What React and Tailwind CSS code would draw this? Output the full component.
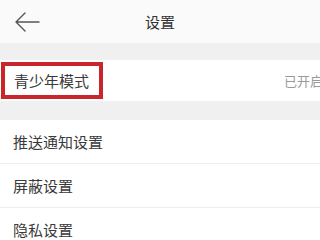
import React from "react";

const rows = ["推送通知设置", "屏蔽设置", "隐私设置"];

const BackArrow = () => (
  <svg width="26" height="22" viewBox="0 0 26 22" fill="none">
    <path d="M11 2 L2 11 L11 20 M2 11 H25" stroke="#555" strokeWidth="1.4" strokeLinecap="round" strokeLinejoin="round" />
  </svg>
);

const App = () => {
  return (
    <div
      className="w-[320px] h-[240px] overflow-hidden bg-white text-[#3a3a3a]"
      style={{ fontFamily: '"Noto Sans CJK SC", "Noto Sans", sans-serif' }}
    >
      {/* header */}
      <div className="h-[43px] bg-[#fafafa] grid grid-cols-[1fr_auto_1fr] items-center">
        <div className="pl-[14px] flex items-center">
          <BackArrow />
        </div>
        <span className="text-[15px] leading-none text-[#333]">设置</span>
        <div />
      </div>

      <div className="h-[17px] bg-[#f0f0f0]" />

      {/* teen mode row */}
      <div className="h-[41px] flex items-center pl-[1px]">
        <div className="h-[37px] w-[102px] border-[4px] border-[#c9262b] flex items-center pl-[9px]">
          <span className="text-[15px] leading-none">青少年模式</span>
        </div>
        <span className="ml-auto -mr-[3px] shrink-0 text-[13px] leading-none text-[#999]">已开启</span>
      </div>

      <div className="h-[19px] bg-[#f0f0f0]" />

      {rows.map((label) => (
        <div key={label} className="h-[44px] flex items-center pl-[13px] border-b border-[#eeeeee]">
          <span className="text-[15px] leading-none">{label}</span>
        </div>
      ))}
    </div>
  );
};

export default App;
